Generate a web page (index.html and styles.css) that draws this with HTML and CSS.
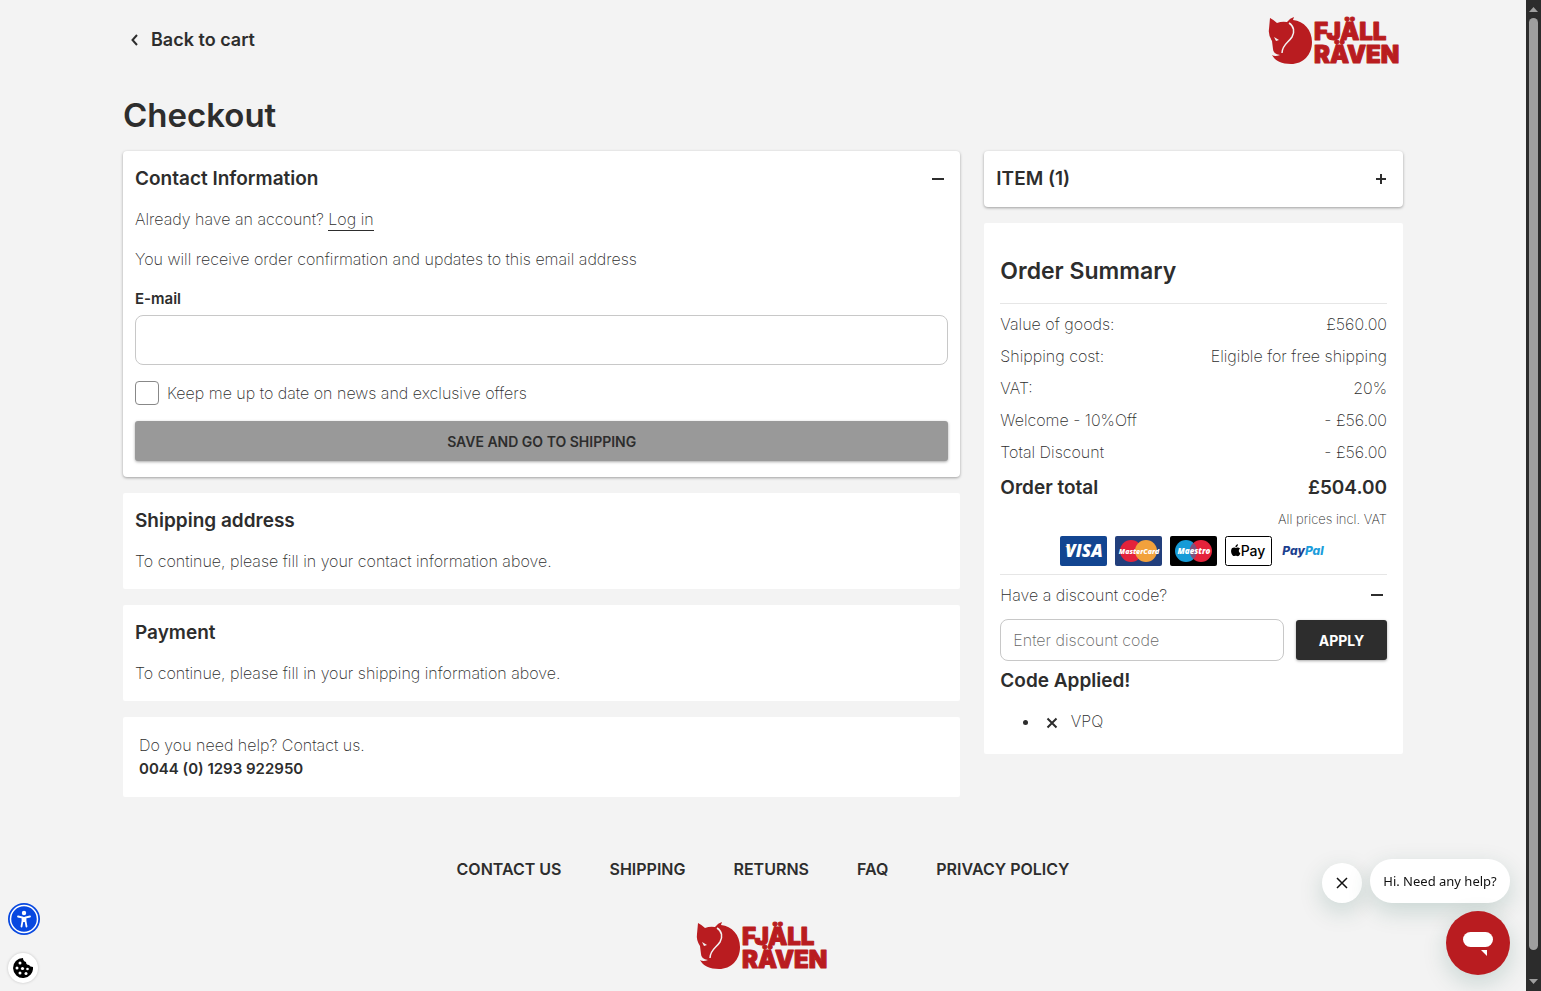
FILE: index.html
```
<!DOCTYPE html>
<html lang="en">
<head>
    <title>Checkout - Fjällräven</title>
    <meta charset="UTF-8">
    <meta name="viewport" content="width=device-width, initial-scale=1.0">
    <link rel="stylesheet" href="styles.css">
</head>
<body>
    <div class="container">
        <header class="header">
            <a class="back" href="#">
                <svg width="24" height="24" viewBox="0 0 24 24"><path d="M14 7 L9.500 12 L14 17"/></svg>
                Back to cart
            </a>
            <a href="#" aria-label="Fjällräven">
                <svg class="logo" viewBox="0 0 136 48">
                    <path fill="#b91c20" d="M3 2 Q7 4 10 7 Q15 5 20 6 Q23 2 27 1 L26 4 C37 5 45 14 45 26 C45 39 36 48 24 48 C15 48 8 45 5 39 Q8 41 13 39 Q6 38 6 33 L5 25 Q1 19 2 13 Z"/>
                    <path fill="none" stroke="#f2f2f2" stroke-width="1.500" d="M22 7 C27 10 28 16 25 21 C21 27 15 29 15 37"/>
                    <path fill="#f2f2f2" d="M7 21 L12 24 L9 25 Z"/>
                    <text class="logo-text" x="47" y="24">FJÄLL<tspan x="47" dy="23">RÄVEN</tspan></text>
                </svg>
            </a>
        </header>

        <h1>Checkout</h1>

        <main class="columns">
            <div class="stack">
                <section class="card raised">
                    <div class="card-head">
                        <h2>Contact Information</h2>
                        <button class="toggle" aria-label="Collapse"><svg width="20" height="20" viewBox="0 0 20 20"><path d="M4 10H16"/></svg></button>
                    </div>
                    <p>Already have an account? <a class="login" href="#">Log in</a></p>
                    <p>You will receive order confirmation and updates to this email address</p>
                    <label class="field-label" for="email">E-mail</label>
                    <input class="field" type="email" id="email">
                    <div class="check">
                        <input type="checkbox" id="news">
                        <label for="news">Keep me up to date on news and exclusive offers</label>
                    </div>
                    <button class="btn save-btn">SAVE AND GO TO SHIPPING</button>
                </section>

                <section class="card">
                    <h2>Shipping address</h2>
                    <p>To continue, please fill in your contact information above.</p>
                </section>

                <section class="card">
                    <h2>Payment</h2>
                    <p>To continue, please fill in your shipping information above.</p>
                </section>

                <section class="card help">
                    <div>Do you need help? Contact us.</div>
                    <strong>0044 (0) 1293 922950</strong>
                </section>
            </div>

            <div class="stack">
                <section class="card raised">
                    <div class="card-head">
                        <h2>ITEM (1)</h2>
                        <button class="toggle" aria-label="Expand"><svg width="20" height="20" viewBox="0 0 20 20"><path d="M5 10H15M10 5V15"/></svg></button>
                    </div>
                </section>

                <section class="card summary">
                    <h2>Order Summary</h2>
                    <table>
                        <tr><th>Value of goods:</th><td>£560.00</td></tr>
                        <tr><th>Shipping cost:</th><td>Eligible for free shipping</td></tr>
                        <tr><th>VAT:</th><td>20%</td></tr>
                        <tr><th>Welcome - 10%Off</th><td>- £56.00</td></tr>
                        <tr><th>Total Discount</th><td>- £56.00</td></tr>
                        <tr class="total"><th>Order total</th><td>£504.00</td></tr>
                    </table>
                    <div class="note">All prices incl. VAT</div>

                    <div class="payments">
                        <svg viewBox="0 0 47 30">
                            <rect width="47" height="30" rx="2" fill="#124591"/>
                            <path d="M5 10H10L12 16Z" fill="#e8a33b"/>
                            <text x="24" y="21" class="visa">VISA</text>
                        </svg>
                        <svg viewBox="0 0 47 30">
                            <rect width="47" height="30" rx="2" fill="#223f7c"/>
                            <circle cx="16" cy="15" r="11" fill="#e4233b"/>
                            <circle cx="31" cy="15" r="11" fill="#f2a13c"/>
                            <text x="24" y="18" class="card-name">MasterCard</text>
                        </svg>
                        <svg viewBox="0 0 47 30">
                            <rect width="47" height="30" rx="2" fill="#000"/>
                            <circle cx="16" cy="15" r="11" fill="#169bd7"/>
                            <circle cx="31" cy="15" r="11" fill="#e4233b"/>
                            <path d="M23.500 7 A11 11 0 0 1 23.500 23 A11 11 0 0 1 23.500 7Z" fill="#7b527f"/>
                            <text x="24" y="18" class="card-name maestro">Maestro</text>
                        </svg>
                        <svg viewBox="0 0 47 30">
                            <rect x=".5" y=".5" width="46" height="29" rx="2" fill="#fff" stroke="#000"/>
                            <path d="M10.500 12 C12 11.200 14 11.200 15 12.500 C13.200 13.800 13.400 16.200 15.400 17.200 C14.600 19.500 13.200 20.600 12 20 C11 19.600 10.300 19.700 9.500 20 C7.500 20.700 5.600 16.500 6.200 14 C6.700 11.700 8.800 11.100 10.500 12Z M10.400 11.200 C10.300 9.700 11.500 8.500 13 8.300 C13 9.900 12 11.100 10.400 11.200Z"/>
                            <text x="28" y="20" class="apple">Pay</text>
                        </svg>
                        <svg viewBox="0 0 47 30">
                            <text x="23" y="19" class="paypal"><tspan fill="#1c3f8f">Pay</tspan><tspan fill="#1b9ddb">Pal</tspan></text>
                        </svg>
                    </div>

                    <div class="discount-head">
                        <label for="code">Have a discount code?</label>
                        <button class="toggle" aria-label="Collapse"><svg width="20" height="20" viewBox="0 0 20 20"><path d="M4 10H16"/></svg></button>
                    </div>
                    <div class="discount-form">
                        <input class="field" type="text" id="code" placeholder="Enter discount code">
                        <button class="btn apply-btn">APPLY</button>
                    </div>
                    <h3>Code Applied!</h3>
                    <ul class="codes">
                        <li>
                            <button class="remove" aria-label="Remove code"><svg width="12" height="12" viewBox="0 0 12 12"><path d="M1.500 1.500L10.500 10.500M10.500 1.500L1.500 10.500"/></svg></button>
                            VPQ
                        </li>
                    </ul>
                </section>
            </div>
        </main>
    </div>

    <footer class="footer">
        <nav>
            <a href="#">CONTACT US</a>
            <a href="#">SHIPPING</a>
            <a href="#">RETURNS</a>
            <a href="#">FAQ</a>
            <a href="#">PRIVACY POLICY</a>
        </nav>
        <svg class="logo" viewBox="0 0 136 48">
            <path fill="#b91c20" d="M3 2 Q7 4 10 7 Q15 5 20 6 Q23 2 27 1 L26 4 C37 5 45 14 45 26 C45 39 36 48 24 48 C15 48 8 45 5 39 Q8 41 13 39 Q6 38 6 33 L5 25 Q1 19 2 13 Z"/>
            <path fill="none" stroke="#f2f2f2" stroke-width="1.500" d="M22 7 C27 10 28 16 25 21 C21 27 15 29 15 37"/>
            <path fill="#f2f2f2" d="M7 21 L12 24 L9 25 Z"/>
            <text class="logo-text" x="47" y="24">FJÄLL<tspan x="47" dy="23">RÄVEN</tspan></text>
        </svg>
    </footer>

    <!-- Side widgets -->
    <div class="side-tools">
        <button class="access" aria-label="Accessibility">
            <svg width="32" height="32" viewBox="0 0 32 32">
                <circle cx="16" cy="16" r="16" fill="#0848e0"/>
                <circle cx="16" cy="16" r="13.500" fill="none" stroke="#fff" stroke-width="1.500"/>
                <circle cx="16" cy="10" r="2.200" fill="#fff"/>
                <path d="M10 13.500L14.500 14.500V18L13.500 23.500M22 13.500L17.500 14.500V18L18.500 23.500" fill="none" stroke="#fff" stroke-width="1.800" stroke-linecap="round"/>
                <path d="M14 14H18V19H14Z" fill="#fff"/>
            </svg>
        </button>
        <button class="cookie" aria-label="Cookie settings">
            <svg width="20" height="20" viewBox="0 0 20 20">
                <path d="M10 0 Q10 3 13 4 Q13 7 16 7 Q17 9 20 9 A10 10 0 1 1 10 0Z"/>
                <g fill="#fff"><circle cx="7" cy="5" r="1.500"/><circle cx="4" cy="10" r="1.500"/><circle cx="9.500" cy="10.500" r="1.600"/><circle cx="7" cy="15" r="1.500"/><circle cx="13" cy="15.500" r="1.500"/><circle cx="14.500" cy="11" r="1.300"/></g>
            </svg>
        </button>
    </div>

    <div class="chat">
        <div class="chat-row">
            <button class="chat-close" aria-label="Close"><svg width="12" height="12" viewBox="0 0 12 12"><path d="M1 1L11 11M11 1L1 11"/></svg></button>
            <div class="chat-bubble">Hi. Need any help?</div>
        </div>
        <button class="chat-open" aria-label="Open chat">
            <svg width="32" height="28" viewBox="0 0 32 28" fill="#fff"><rect x="1" y="3" width="30" height="15" rx="7.500"/><path d="M19 21H25V27Z"/></svg>
        </button>
    </div>

    <div class="scrollbar">
        <svg width="9" height="5" viewBox="0 0 9 5"><path d="M0 5L4.500 0L9 5Z"/></svg>
        <div class="thumb"></div>
        <svg width="9" height="5" viewBox="0 0 9 5"><path d="M0 0L4.500 5L9 0Z"/></svg>
    </div>
</body>
</html>
```
FILE: styles.css
```
:root {
    --bg: #f3f3f3;
    --dark: #2d2d2d;
    --red: #b91c20;
    --line: #e6e6e6;
}

* {
    box-sizing: border-box;
}

body {
    margin: 0;
    padding-right: 15px;
    background: var(--bg);
    color: var(--dark);
    font-family: Inter, "Open Sans", sans-serif;
    font-size: 16px;
    font-weight: 200;
    line-height: 24px;
}

a {
    color: inherit;
    text-decoration: none;
}

button {
    font-family: inherit;
    border: none;
    padding: 0;
    cursor: pointer;
}

h1, h2, h3, p {
    margin: 0;
}

.container {
    max-width: 1280px;
    margin: 0 auto;
}

/* Header */
.header {
    display: flex;
    justify-content: space-between;
    align-items: center;
    height: 80px;
}

.back {
    display: flex;
    align-items: center;
    gap: 4px;
    font-size: 18px;
    font-weight: 600;
}

.back svg {
    fill: none;
    stroke: var(--dark);
    stroke-width: 2;
}

.logo {
    display: block;
    width: 136px;
    height: 48px;
    overflow: visible;
}

.logo-text {
    font-family: Inter, sans-serif;
    font-size: 24px;
    font-weight: 900;
    fill: var(--red);
    stroke: var(--red);
    stroke-width: 1px;
    stroke-linejoin: round;
}

h1 {
    margin: 15px 0 16px;
    font-size: 33px;
    line-height: 40px;
    font-weight: 600;
}

h2, h3 {
    font-size: 19px;
    line-height: 24px;
    font-weight: 600;
}

/* Cards */
.columns {
    display: grid;
    grid-template-columns: 2fr 1fr;
    gap: 24px;
    align-items: start;
}

.stack {
    display: grid;
    gap: 16px;
}

.card {
    background: #fff;
    padding: 16px 12px;
    border-radius: 2px;
}

.raised {
    border-radius: 4px;
    box-shadow: 0 1px 3px rgba(0,0,0,0.35);
}

.card p {
    margin-top: 16px;
}

.card-head, .discount-head {
    display: flex;
    justify-content: space-between;
    align-items: center;
}

.toggle {
    display: flex;
    background: none;
}

.toggle svg {
    stroke: var(--dark);
    stroke-width: 2;
}

.login {
    border-bottom: 1px solid var(--dark);
    padding-bottom: 1px;
}

.field-label {
    display: block;
    margin: 16px 0 4px;
    font-size: 15px;
    font-weight: 600;
}

.field {
    width: 100%;
    height: 50px;
    padding: 0 12px;
    border: 1px solid #c8c8c8;
    border-radius: 8px;
    background: #fff;
    font: inherit;
    color: inherit;
}

.field::placeholder {
    color: #666;
}

.field-label + .field {
    display: block;
}

.check {
    display: flex;
    gap: 8px;
    margin: 16px 0;
}

.check input {
    appearance: none;
    width: 24px;
    height: 24px;
    margin: 0;
    border: 1px solid #888;
    border-radius: 4px;
}

.btn {
    height: 40px;
    border-radius: 3px;
    font-size: 14px;
    font-weight: 600;
    box-shadow: 0 1px 3px rgba(0,0,0,0.35);
}

.save-btn {
    display: block;
    width: 100%;
    background: #999;
    color: var(--dark);
}

.help {
    padding: 16px;
}

.help strong {
    display: block;
    font-size: 15px;
    font-weight: 600;
}

/* Order summary */
.summary {
    padding: 32px 16px 21px;
}

.summary h2 {
    padding-bottom: 16px;
    border-bottom: 1px solid var(--line);
    font-size: 23px;
    line-height: 32px;
}

table {
    width: 100%;
    margin-top: 4px;
    border-collapse: collapse;
}

th, td {
    height: 32px;
    padding: 0;
    font-weight: 200;
    text-align: left;
}

td {
    text-align: right;
}

.total th, .total td {
    height: 40px;
    font-size: 19px;
    font-weight: 600;
}

.note {
    font-size: 13px;
    line-height: 22px;
    text-align: right;
}

.payments {
    display: flex;
    justify-content: center;
    gap: 8px;
    padding: 6px 0 8px;
    border-bottom: 1px solid var(--line);
}

.payments svg {
    width: 47px;
    height: 30px;
}

.payments text {
    font-family: Inter, sans-serif;
    text-anchor: middle;
}

.payments .visa {
    font-family: "Open Sans", sans-serif;
    font-size: 17px;
    font-weight: 800;
    font-style: italic;
    fill: #fff;
}

.payments .card-name {
    font-family: "Open Sans", sans-serif;
    font-size: 7px;
    font-weight: 800;
    font-style: italic;
    fill: #fff;
}

.payments .maestro {
    font-size: 8px;
}

.payments .apple {
    font-size: 14px;
    font-weight: 500;
}

.payments .paypal {
    font-size: 12px;
    font-weight: 800;
    font-style: italic;
}

.discount-head {
    height: 40px;
}

.discount-form {
    display: flex;
    align-items: center;
    gap: 12px;
    margin: 4px 0 8px;
}

.discount-form .field {
    flex: 1;
    height: 42px;
}

.apply-btn {
    width: 91px;
    background: var(--dark);
    color: #fff;
    font-weight: 700;
}

.codes {
    margin: 16px 0 0;
    padding-left: 40px;
}

.remove {
    margin: 0 8px 0 6px;
    background: none;
    vertical-align: middle;
}

.remove svg {
    display: block;
    stroke: var(--dark);
    stroke-width: 2;
}

/* Footer */
.footer {
    display: flex;
    flex-direction: column;
    align-items: center;
    gap: 40px;
    margin-top: 60px;
}

.footer nav {
    display: flex;
    gap: 48px;
    font-size: 16px;
    font-weight: 600;
}

/* Widgets */
.side-tools {
    position: fixed;
    left: 8px;
    bottom: 8px;
    display: grid;
    gap: 18px;
}

.side-tools button {
    display: flex;
    align-items: center;
    justify-content: center;
    width: 32px;
    border-radius: 50%;
    background: none;
}

.side-tools .cookie {
    width: 30px;
    height: 30px;
    background: #fff;
    box-shadow: 0 0 3px rgba(0,0,0,0.2);
}

.chat {
    position: fixed;
    right: 31px;
    bottom: 16px;
    display: flex;
    flex-direction: column;
    align-items: flex-end;
    gap: 8px;
}

.chat-row {
    display: flex;
    align-items: flex-end;
    gap: 8px;
}

.chat button {
    display: flex;
    align-items: center;
    justify-content: center;
    border-radius: 50%;
    box-shadow: 0 8px 24px rgba(0,80,60,0.18);
}

.chat .chat-close {
    width: 40px;
    height: 40px;
    background: #fff;
}

.chat-close svg {
    stroke: #111;
    stroke-width: 1.5;
}

.chat-bubble {
    min-width: 140px;
    padding: 10px 12px;
    border-radius: 22px;
    background: #fff;
    color: #111;
    font-family: "Noto Sans", sans-serif;
    font-size: 13px;
    font-weight: 400;
    text-align: center;
    box-shadow: 0 8px 24px rgba(0,80,60,0.18);
}

.chat .chat-open {
    width: 64px;
    height: 64px;
    background: var(--red);
}

.scrollbar {
    position: fixed;
    top: 0;
    right: 0;
    bottom: 0;
    width: 15px;
    display: flex;
    flex-direction: column;
    align-items: center;
    gap: 6px;
    padding: 7px 0;
    background: #2c2c2c;
    fill: #9f9f9f;
}

.thumb {
    width: 9px;
    flex: 1;
    margin-bottom: 23px;
    border-radius: 5px;
    background: #9f9f9f;
}
```
